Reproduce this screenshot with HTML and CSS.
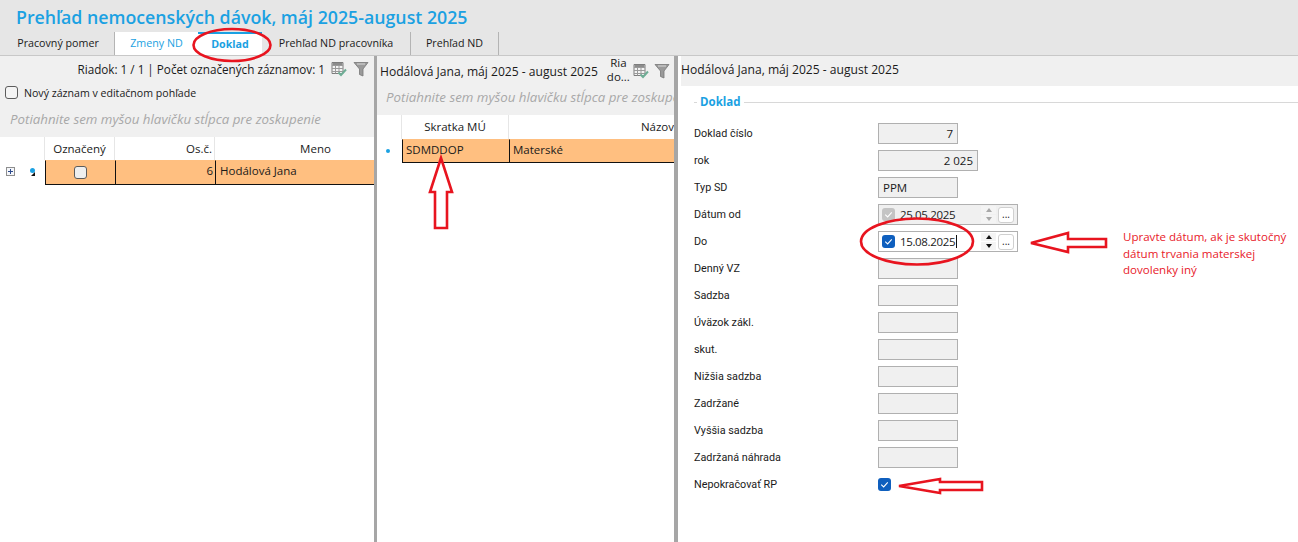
FILE: index.html
```html
<!DOCTYPE html>
<html lang="sk">
<head>
<meta charset="utf-8">
<title>Prehľad nemocenských dávok</title>
<link rel="stylesheet" href="styles.css">
</head>
<body>
<div class="app">
  <header class="top">
    <h1 class="title">Prehľad nemocenských dávok, máj 2025-august 2025</h1>
    <nav class="tabs">
      <div class="tab t1">Pracovný pomer</div>
      <div class="tab t2 active">Zmeny ND</div>
      <div class="tab t3 selected">Doklad</div>
      <div class="tab t4">Prehľad ND pracovníka</div>
      <div class="tab t5">Prehľad ND</div>
    </nav>
  </header>
  <main class="panes">
    <section class="pane left">
      <div class="toolbar right-align">
        <span class="status">Riadok: 1 / 1 | Počet označených záznamov: 1</span>
        <svg class="ico-grid" viewBox="0 0 16 16"><use href="#gridicon"/></svg>
        <svg class="ico-filter" viewBox="0 0 16 16"><use href="#filtericon"/></svg>
      </div>
      <label class="newrec"><span class="cb"></span><span>Nový záznam v editačnom pohľade</span></label>
      <div class="grouphint">Potiahnite sem myšou hlavičku stĺpca pre zoskupenie</div>
      <div class="gridhead lefthead">
        <div class="hc c-ind"></div>
        <div class="hc c-mark">Označený</div>
        <div class="hc c-os">Os.č.</div>
        <div class="hc c-name">Meno</div>
      </div>
      <div class="gridrow leftrow">
        <div class="ind">
          <span class="plus"></span>
          <span class="dot"></span>
          <span class="tri"></span>
        </div>
        <div class="rc c-mark center"><span class="cb cell"></span></div>
        <div class="rc c-os num">6</div>
        <div class="rc c-name">Hodálová Jana</div>
      </div>
    </section>
    <div class="split"></div>
    <section class="pane mid">
      <div class="toolbar midbar">
        <span class="panetitle">Hodálová Jana, máj 2025 - august 2025</span>
        <span class="trunc">Ria<br>do...</span>
        <svg class="ico-grid" viewBox="0 0 16 16"><use href="#gridicon"/></svg>
        <svg class="ico-filter" viewBox="0 0 16 16"><use href="#filtericon"/></svg>
      </div>
      <div class="grouphint midhint">Potiahnite sem myšou hlavičku stĺpca pre zoskupenie</div>
      <div class="gridhead midhead">
        <div class="hc m-ind"></div>
        <div class="hc m-code">Skratka MÚ</div>
        <div class="hc m-name">Názov</div>
      </div>
      <div class="gridrow midrow">
        <div class="ind2"><span class="dot"></span></div>
        <div class="rc m-code">SDMDDOP</div>
        <div class="rc m-name">Materské</div>
      </div>
    </section>
    <div class="split split2"></div>
    <section class="pane rightp">
      <div class="righttitle">Hodálová Jana, máj 2025 - august 2025</div>
      <div class="group">
        <div class="legend"><span>Doklad</span></div>
        <div class="form">
          <div class="lab">Doklad číslo</div><div class="inp w80 num">7</div>
          <div class="lab">rok</div><div class="inp w100 num">2 025</div>
          <div class="lab">Typ SD</div><div class="inp w80">PPM</div>
          <div class="lab">Dátum od</div>
          <div class="date off">
            <span class="chk off"><svg viewBox="0 0 12 12"><path d="M3 6.200 5.200 8.200 9 4"/></svg></span>
            <span class="dtxt">25.05.2025</span>
            <span class="spin"><i class="up"></i><i class="dn"></i></span>
            <span class="dots">...</span>
          </div>
          <div class="lab">Do</div>
          <div class="date on">
            <span class="chk"><svg viewBox="0 0 12 12"><path d="M3 6.200 5.200 8.200 9 4"/></svg></span>
            <span class="dtxt caret">15.08.2025</span>
            <span class="spin"><i class="up"></i><i class="dn"></i></span>
            <span class="dots">...</span>
          </div>
          <div class="lab">Denný VZ</div><div class="inp w80"></div>
          <div class="lab">Sadzba</div><div class="inp w80"></div>
          <div class="lab">Úväzok zákl.</div><div class="inp w80"></div>
          <div class="lab">skut.</div><div class="inp w80"></div>
          <div class="lab">Nižšia sadzba</div><div class="inp w80"></div>
          <div class="lab">Zadržané</div><div class="inp w80"></div>
          <div class="lab">Vyššia sadzba</div><div class="inp w80"></div>
          <div class="lab">Zadržaná náhrada</div><div class="inp w80"></div>
          <div class="lab">Nepokračovať RP</div>
          <div class="chkwrap"><span class="chk big"><svg viewBox="0 0 12 12"><path d="M3 6.200 5.200 8.200 9 4"/></svg></span></div>
        </div>
      </div>
    </section>
  </main>

  <svg class="marks" width="1298" height="542" viewBox="0 0 1298 542">
    <g fill="none" stroke="#e8141f" stroke-width="2.600">
      <ellipse cx="232" cy="45" rx="38.500" ry="16"/>
      <ellipse cx="917" cy="241.500" rx="56" ry="23"/>
      <path d="M441 158 L430 192 L435 192 L435 228 L447 228 L447 192 L452 192 Z"/>
      <path d="M1031 243 L1068 233 L1068 239 L1106 239 L1106 247 L1068 247 L1068 252 Z"/>
      <path d="M899 486 L940 479 L940 482 L982 482 L982 490 L940 490 L940 493 Z"/>
    </g>
  </svg>
  <div class="note">Upravte dátum, ak je skutočný dátum trvania materskej dovolenky iný</div>

  <svg class="defs" width="0" height="0">
    <defs>
      <g id="gridicon">
        <path d="M1 1.500h11v11H1z" fill="#f4f4f4" stroke="#7d7d7d"/>
        <path d="M1 4.500h11M1 7.500h11M1 10.500h11M4.500 4.500v8M8 4.500v8" stroke="#9a9a9a" fill="none"/>
        <path d="M1.500 2h10v2h-10z" fill="#8c8c8c"/>
        <path d="M7.500 11.500 10 14 15 8.500" stroke="#6fae96" stroke-width="2" fill="none"/>
      </g>
      <g id="filtericon">
        <path d="M1 1.500h14L10 8v7l-3.500-1.500V8z" fill="#9a9a9a" stroke="#777" stroke-width=".8"/>
        <path d="M4 3h8" stroke="#d8d8d8"/>
      </g>
    </defs>
  </svg>
</div>
</body>
</html>
```
FILE: styles.css
```css
* { box-sizing: border-box; }
html, body { margin: 0; padding: 0; }
body {
  width: 1298px;
  height: 542px;
  overflow: hidden;
  background: #fff;
  font-family: "Open Sans", "Noto Sans", sans-serif;
  font-size: 12px;
  color: #1a1a1a;
}
.app { position: relative; width: 1298px; height: 542px; display: flex; flex-direction: column; }
.top { height: 56px; background: #e6e6e6; border-bottom: 1px solid #c8c8c8; flex: none; }
.title {
  margin: 0;
  padding: 5px 0 0 16px;
  height: 32px;
  font-size: 17.750px;
  line-height: 25px;
  font-weight: 600;
  color: #1ba1e2;
  white-space: nowrap;
}
.tabs { display: flex; height: 23px; }
.tab {
  height: 23px;
  line-height: 23px;
  text-align: center;
  font-size: 10.700px;
  color: #1a1a1a;
  white-space: nowrap;
}
.t1 { width: 115px; padding-left: 2px; border-right: 1px solid #b4b4b4; }
.t2 { width: 83px; background: #fff; color: #1ba1e2; }
.t3 { width: 64px; background: #fff; color: #1ba1e2; font-weight: 700; border-top: 2px solid #1ba1e2; line-height: 21px; }
.t4 { width: 149px; border-right: 1px solid #b4b4b4; }
.t5 { width: 88px; border-right: 1px solid #b4b4b4; }

.panes { display: flex; flex: 1; min-height: 0; }
.pane { min-width: 0; overflow: hidden; }
.left { width: 374px; }
.mid { width: 297px; }
.rightp { flex: 1; }
.split { width: 3px; background: #a6a6a6; flex: none; }
.split2 { width: 4px; margin-right: 3px; }

.toolbar { display: flex; align-items: center; height: 26px; background: #f0f0f0; }
.right-align { justify-content: flex-end; padding-right: 5px; }
.status { font-size: 11.700px; margin-right: 6px; white-space: nowrap; }
.ico-grid { width: 16px; height: 16px; margin-right: 6px; flex: none; }
.ico-filter { width: 16px; height: 16px; flex: none; }
.newrec {
  display: flex;
  align-items: center;
  gap: 6px;
  height: 21px;
  padding-left: 5px;
  background: #f0f0f0;
  font-size: 10.600px;
  white-space: nowrap;
}
.cb {
  display: inline-block;
  width: 13px;
  height: 13px;
  border: 1px solid #5c5c5c;
  border-radius: 3px;
  background: #f4f4f4;
}
.grouphint {
  height: 34px;
  line-height: 32px;
  padding-left: 10px;
  background: #f0f0f0;
  color: #a8a8a8;
  font-style: italic;
  font-size: 13.300px;
  white-space: nowrap;
  overflow: hidden;
}
.gridhead { display: flex; height: 23px; background: #fff; }
.hc {
  height: 23px;
  line-height: 23px;
  font-size: 11.500px;
  text-align: center;
  border-right: 1px solid #e6e6e6;
  white-space: nowrap;
  flex: none;
}
.gridrow { display: flex; height: 25px; }
.rc {
  background: #ffbf80;
  border-top: 1px solid #ffbf80;
  border-bottom: 1px solid #111;
  border-left: 1px solid #111;
  line-height: 20px;
  font-size: 11.500px;
  padding: 0 3px;
  flex: none;
  white-space: nowrap;
}
.c-ind { width: 45px; }
.c-mark { width: 70px; }
.c-os { width: 100px; text-align: right; padding-right: 2px; }
.c-name { width: 159px; border-right: 0; padding-left: 4px; }
.lefthead .c-name { padding-left: 42px; }
.ind { width: 45px; flex: none; position: relative; }
.center { display: flex; justify-content: center; align-items: center; }
.num { text-align: right; }
.cb.cell { background: #efefef; }
.plus {
  position: absolute;
  left: 6px;
  top: 7px;
  width: 9px;
  height: 9px;
  border: 1px solid #8e8e8e;
  background:
    linear-gradient(#2c4a8c, #2c4a8c) center / 5px 1px no-repeat,
    linear-gradient(#2c4a8c, #2c4a8c) center / 1px 5px no-repeat,
    #f4f6fa;
}
.dot { position: absolute; left: 30px; top: 8px; width: 5px; height: 5px; border-radius: 50%; background: #1ba1e2; }
.tri { position: absolute; left: 31px; top: 12px; width: 0; height: 0; border-style: solid; border-width: 0 0 4px 4px; border-color: transparent transparent #111 transparent; }

.midbar { height: 30px; padding-left: 3px; }
.panetitle { font-size: 12.100px; white-space: nowrap; }
.trunc { width: 27px; margin: 0 0 3px 7px; font-size: 11.500px; line-height: 14px; text-align: center; flex: none; height: 28px; }
.midbar .ico-grid { margin-left: 1px; margin-right: 5px; }
.midhint { height: 29px; line-height: 22px; padding-left: 9px; }
.mid .gridhead { height: 24px; }
.midhead .hc { height: 24px; line-height: 24px; }
.m-ind { width: 25px; }
.m-code { width: 107px; }
.m-name { width: 165px; text-align: right; border-right: 0; }
.midhead .m-name { padding-right: 0; }
.midrow .m-name { text-align: left; }
.ind2 { width: 25px; flex: none; position: relative; }
.ind2 .dot { left: 9px; top: 10px; width: 4px; height: 4px; }
.midrow { height: 24px; }

.righttitle { height: 30px; line-height: 28px; background: #f0f0f0; font-size: 12.100px; white-space: nowrap; }
.group { padding: 0 0 0 13px; }
.legend {
  height: 34px;
  padding-top: 7px;
  display: flex;
  align-items: flex-start;
  color: #1ba1e2;
  font-weight: 700;
  font-size: 11.500px;
  line-height: 18px;
  background: linear-gradient(#d8d8d8, #d8d8d8) 0 16px / 100% 1px no-repeat;
}
.legend span { background: #fff; margin-left: 3px; padding: 0 3px; }
.form {
  display: grid;
  grid-template-columns: 184px 1fr;
  grid-auto-rows: 27px;
  align-items: center;
}
.lab { font-family: Roboto, "Open Sans", sans-serif; font-size: 10.800px; white-space: nowrap; }
.inp {
  height: 21px;
  line-height: 19px;
  border: 1px solid #b0b0b0;
  background: #f0f0f0;
  padding: 0 4px;
  font-size: 11.500px;
}
.w80 { width: 80px; }
.w100 { width: 100px; }
.date {
  width: 140px;
  height: 21px;
  border: 1px solid #b0b0b0;
  background: #f0f0f0;
  display: flex;
  align-items: center;
  font-size: 11.500px;
  letter-spacing: -0.350px;
  padding-left: 3px;
}
.date.on { background: #fff; }
.chk {
  width: 13px;
  height: 13px;
  border-radius: 3px;
  background: #0f5fbe;
  display: flex;
  flex: none;
}
.chk.off { background: #c4c4c4; }
.chk svg { width: 13px; height: 13px; }
.chk path { fill: none; stroke: #fff; stroke-width: 1; }
.dtxt { margin-left: 5px; width: 81px; flex: none; }
.caret::after { content: ""; display: inline-block; width: 1px; height: 13px; background: #111; vertical-align: -2px; margin-left: 1px; }
.spin { width: 15px; display: flex; flex-direction: column; gap: 1px; flex: none; }
.spin i { display: flex; height: 8px; background: #f4f4f4; align-items: center; justify-content: center; }
.spin i::after { content: ""; border-left: 3.500px solid transparent; border-right: 3.500px solid transparent; }
.spin .up::after { border-bottom: 4px solid #a8a8a8; }
.spin .dn::after { border-top: 4px solid #a8a8a8; }
.on .spin .up::after { border-bottom-color: #111; }
.on .spin .dn::after { border-top-color: #111; }
.dots {
  width: 16px;
  height: 16px;
  margin-left: 2px;
  border: 1px solid #d0d0d0;
  border-radius: 3px;
  background: #fff;
  text-align: center;
  line-height: 13px;
  font-size: 10px;
  letter-spacing: 0;
  flex: none;
}
.chkwrap { display: flex; align-items: center; }

.marks { position: absolute; left: 0; top: 0; pointer-events: none; }
.note {
  position: absolute;
  left: 1123px;
  top: 229px;
  width: 172px;
  font-size: 11.550px;
  line-height: 16.500px;
  color: #e8202a;
}
.defs { position: absolute; }
```
